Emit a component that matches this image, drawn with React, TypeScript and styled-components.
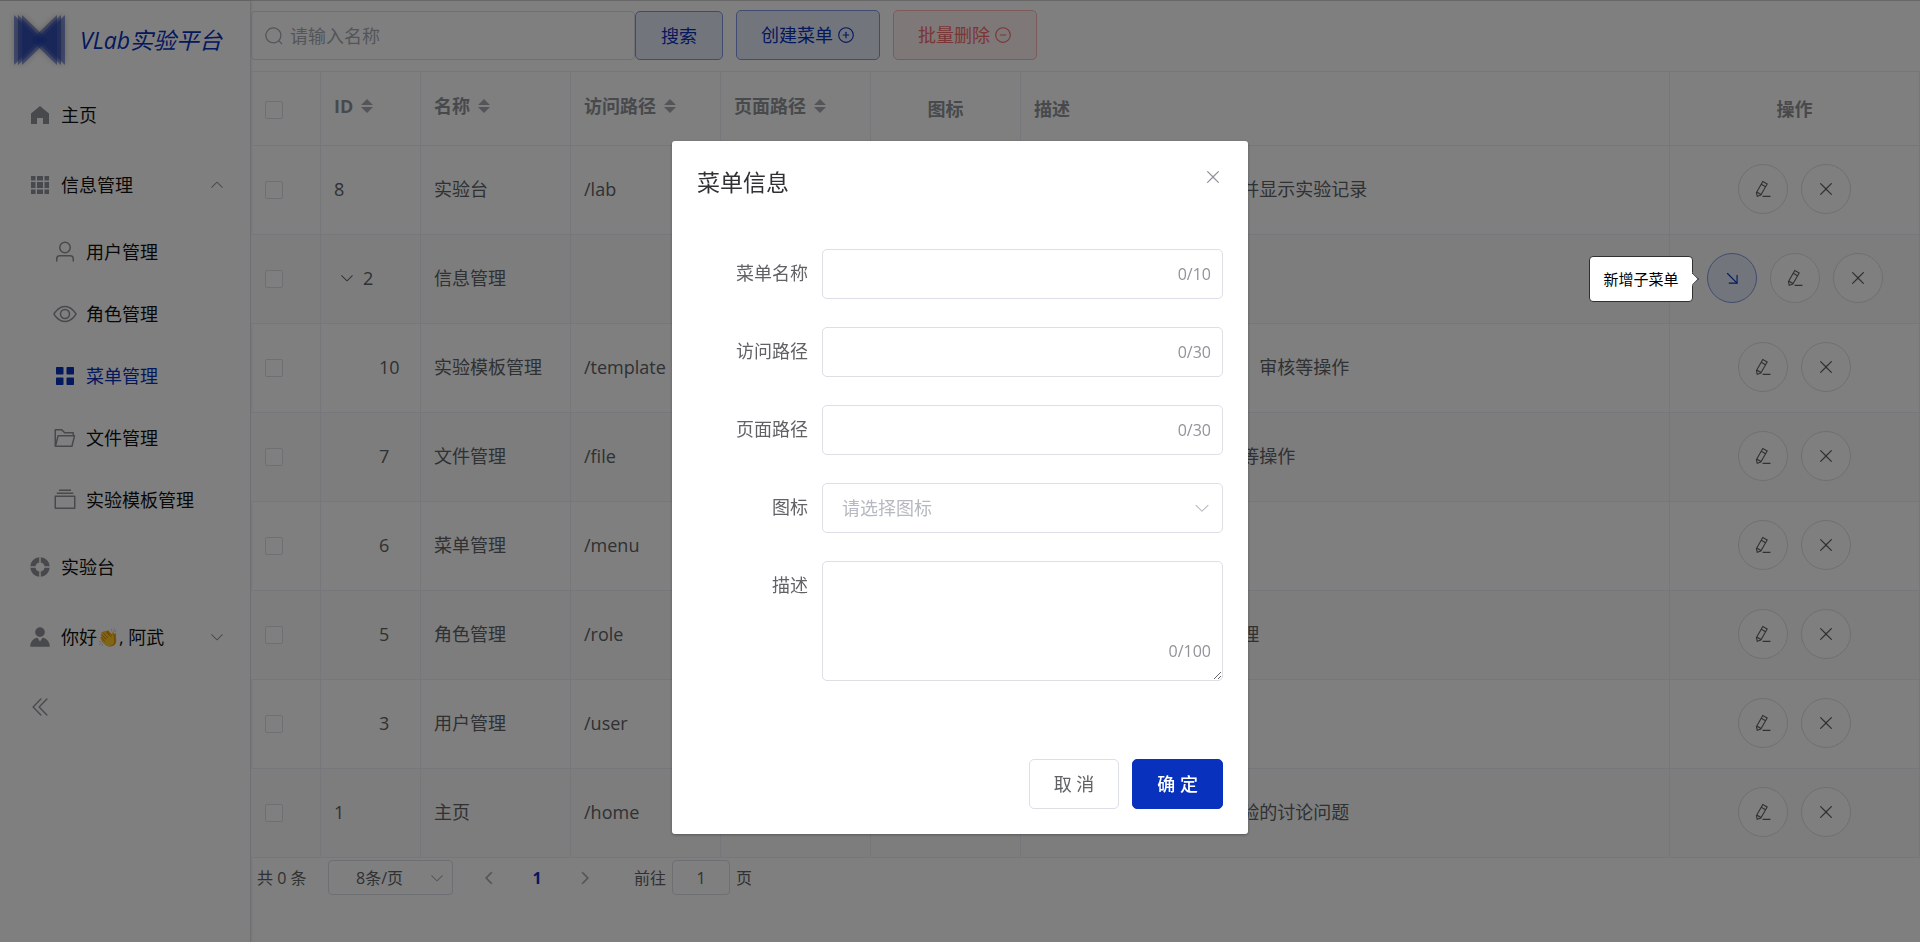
import React from "react";
import styled, { createGlobalStyle, css } from "styled-components";

const primary = "#0831bd";
const border = "#dcdfe6";
const line = "#ebeef5";
const muted = "#909399";
const regular = "#606266";

const GlobalStyle = createGlobalStyle`
  *, *::before, *::after { box-sizing: border-box; }
  body {
    margin: 0;
    background: #fff;
    color: ${regular};
    font-family: "Open Sans", "Noto Sans CJK SC", sans-serif;
    font-size: 18px;
    line-height: 24px;
  }
  button, input, select, textarea { font: inherit; color: inherit; }
  button { cursor: pointer; }
`;

/* ---------- icons ---------- */

const paths = {
  home: ["M512 128 128 447.936V896h255.936V640H640v256h255.936V447.936z"],
  grid: [
    "M640 384v256H384V384zm64 0h192v256H704zm-64 512H384V704h256zm64 0V704h192v192zm-64-768v192H384V128zm64 0h192v192H704zM320 384v256H128V384zm0 512H128V704h192zm0-768v192H128V128z",
  ],
  user: [
    "M512 512a192 192 0 1 0 0-384 192 192 0 0 0 0 384m0 64a256 256 0 1 1 0-512 256 256 0 0 1 0 512m320 320v-96a96 96 0 0 0-96-96H288a96 96 0 0 0-96 96v96a32 32 0 1 1-64 0v-96a160 160 0 0 1 160-160h448a160 160 0 0 1 160 160v96a32 32 0 1 1-64 0",
  ],
  view: [
    "M512 160c320 0 512 352 512 352S832 864 512 864 0 512 0 512s192-352 512-352m0 64c-225.28 0-384.128 208.064-436.8 288 52.608 79.872 211.456 288 436.8 288 225.28 0 384.128-208.064 436.8-288-52.608-79.872-211.456-288-436.8-288m0 64a224 224 0 1 1 0 448 224 224 0 0 1 0-448m0 64a160.192 160.192 0 0 0-160 160c0 88.192 71.744 160 160 160s160-71.808 160-160-71.744-160-160-160",
  ],
  menu: [
    "M160 448a32 32 0 0 1-32-32V160.064a32 32 0 0 1 32-32h256a32 32 0 0 1 32 32V416a32 32 0 0 1-32 32zm448 0a32 32 0 0 1-32-32V160.064a32 32 0 0 1 32-32h255.936a32 32 0 0 1 32 32V416a32 32 0 0 1-32 32zM160 896a32 32 0 0 1-32-32V608a32 32 0 0 1 32-32h256a32 32 0 0 1 32 32v256a32 32 0 0 1-32 32zm448 0a32 32 0 0 1-32-32V608a32 32 0 0 1 32-32h255.936a32 32 0 0 1 32 32v256a32 32 0 0 1-32 32z",
  ],
  folder: [
    "M878.08 448H241.92l-96 384h636.16zM832 384v-64H485.76L357.504 192H128v448l57.92-231.744A32 32 0 0 1 216.96 384zm-24.96 512H96a32 32 0 0 1-32-32V160a32 32 0 0 1 32-32h287.872l128.384 128H864a32 32 0 0 1 32 32v96h23.04a32 32 0 0 1 31.04 39.744l-112 448A32 32 0 0 1 807.04 896",
  ],
  files: [
    "M128 384v448h768V384zm-32-64h832a32 32 0 0 1 32 32v512a32 32 0 0 1-32 32H96a32 32 0 0 1-32-32V352a32 32 0 0 1 32-32m64-128h704v64H160zm96-128h512v64H256z",
  ],
  help: [
    "M926.784 480H701.312A192.512 192.512 0 0 0 544 322.688V97.216A416.064 416.064 0 0 1 926.784 480m0 64A416.064 416.064 0 0 1 544 926.784V701.312A192.512 192.512 0 0 0 701.312 544zM97.28 544h225.472A192.512 192.512 0 0 0 480 701.312v225.472A416.064 416.064 0 0 1 97.216 544zm0-64A416.064 416.064 0 0 1 480 97.216v225.472A192.512 192.512 0 0 0 322.688 480H97.216z",
  ],
  avatar: [
    "M628.736 528.896A416 416 0 0 1 928 928H96a415.872 415.872 0 0 1 299.264-399.104L512 704zM720 304a208 208 0 1 1-416 0 208 208 0 0 1 416 0",
  ],
  collapse: [
    "M529.408 149.376a29.12 29.12 0 0 1 41.728 0 30.592 30.592 0 0 1 0 42.688L259.264 511.936l311.872 319.936a30.592 30.592 0 0 1-.512 43.264 29.12 29.12 0 0 1-41.216-.512L197.76 534.272a32 32 0 0 1 0-44.672zm256 0a29.12 29.12 0 0 1 41.728 0 30.592 30.592 0 0 1 0 42.688L515.264 511.936l311.872 319.936a30.592 30.592 0 0 1-.512 43.264 29.12 29.12 0 0 1-41.216-.512L453.76 534.272a32 32 0 0 1 0-44.672z",
  ],
  arrow: [
    "M831.872 340.864 512 652.672 192.128 340.864a30.592 30.592 0 0 0-42.752 0 29.12 29.12 0 0 0 0 41.6L489.664 714.24a32 32 0 0 0 44.672 0l340.288-331.712a29.12 29.12 0 0 0 0-41.728 30.592 30.592 0 0 0-42.752 0z",
  ],
  search: [
    "m795.904 750.72 124.992 124.928a32 32 0 0 1-45.248 45.248L750.656 795.904a416 416 0 1 1 45.248-45.248zM480 832a352 352 0 1 0 0-704 352 352 0 0 0 0 704",
  ],
  plus: [
    "M352 480h320a32 32 0 1 1 0 64H352a32 32 0 0 1 0-64",
    "M480 672V352a32 32 0 1 1 64 0v320a32 32 0 0 1-64 0",
    "M512 896a384 384 0 1 0 0-768 384 384 0 0 0 0 768m0 64a448 448 0 1 1 0-896 448 448 0 0 1 0 896",
  ],
  minus: [
    "M352 480h320a32 32 0 1 1 0 64H352a32 32 0 0 1 0-64",
    "M512 896a384 384 0 1 0 0-768 384 384 0 0 0 0 768m0 64a448 448 0 1 1 0-896 448 448 0 0 1 0 896",
  ],
  edit: [
    "m199.04 672.64 193.984 112 224-387.968-193.92-112-224 388.032zm-23.872 60.16 32.896 148.288 144.896-45.696zM455.04 229.248l193.92 112 56.704-98.112-193.984-112zM104.32 708.8l384-665.024 304.768 175.936L409.152 884.8h.064l-248.448 78.336zm384 254.272v-64h448v64z",
  ],
  close: [
    "M764.288 214.592 512 466.88 259.712 214.592a31.936 31.936 0 0 0-45.12 45.12L466.752 512 214.528 764.224a31.936 31.936 0 1 0 45.12 45.184L512 557.184l252.288 252.288a31.936 31.936 0 0 0 45.12-45.12L557.12 512.064l252.288-252.352a31.936 31.936 0 1 0-45.12-45.184z",
  ],
  bottomRight: [
    "M352 768a32 32 0 1 0 0 64h448a32 32 0 0 0 32-32V352a32 32 0 0 0-64 0v416z",
    "M777.344 822.624a32 32 0 0 0 45.312-45.312l-544-544a32 32 0 0 0-45.312 45.312z",
  ],
};
type IconName = keyof typeof paths;

const Svg = styled.svg<{ $size: number; $turn: number }>`
  flex: none;
  display: block;
  width: ${(p) => p.$size}px;
  height: ${(p) => p.$size}px;
  fill: currentColor;
  ${(p) => p.$turn !== 0 && css`transform: rotate(${p.$turn}deg);`}
`;

const Icon = ({ name, size = 18, turn = 0 }: { name: IconName; size?: number; turn?: number }) => (
  <Svg viewBox="0 0 1024 1024" aria-hidden="true" $size={size} $turn={turn}>
    {paths[name].map((d) => (
      <path key={d} d={d} />
    ))}
  </Svg>
);

const LogoSvg = styled.svg`
  flex: none;
  width: 52px;
  height: 52px;
  overflow: visible;
  filter: drop-shadow(0 0 3px rgba(0, 0, 0, 0.4));
`;

const Logo = () => (
  <LogoSvg viewBox="0 0 52 52" aria-hidden="true">
    {[0, 4, 8].map((d) => (
      <g key={d} fill="#1f40b4" fillOpacity="0.5">
        <path d={`M${1 + d} 1V51L${27 + d} 26Z`} />
        <path d={`M${52 - d} 1V51L${26 - d} 26Z`} />
      </g>
    ))}
  </LogoSvg>
);

/* ---------- page frame ---------- */

const Page = styled.div`
  display: flex;
  min-height: 100vh;
  border-top: 1px solid #d0d0d0;
`;

const Sidebar = styled.aside`
  flex: none;
  width: 251px;
  border-right: 1px solid ${border};
  box-shadow: 0 0 4px rgba(0, 0, 0, 0.12);
`;

const Brand = styled.a`
  display: flex;
  align-items: center;
  gap: 15px;
  height: 79px;
  padding: 0 0 2px 13px;
  color: ${primary};
  font-size: 23px;
  font-style: italic;
  text-decoration: none;
  white-space: nowrap;
`;

const itemStyles = css`
  display: flex;
  align-items: center;
  gap: 9px;
  width: 100%;
  height: 70px;
  padding: 0 25px 0 28px;
  border: 0;
  background: none;
  text-align: left;
  text-decoration: none;
  color: ${muted};
`;
const MenuLink = styled.a`${itemStyles}`;
const MenuButton = styled.button`${itemStyles}`;
const MenuText = styled.span`
  flex: 1;
  color: #111;
  white-space: nowrap;
`;
const SubMenu = styled.div`
  padding: 1px 0;
`;
const SubLink = styled.a<{ $active?: boolean }>`
  ${itemStyles}
  height: 62px;
  padding-left: 53px;
  ${(p) => p.$active && css`
    color: ${primary};
    ${MenuText} { color: ${primary}; }
  `}
`;

const Main = styled.main`
  flex: 1;
  min-width: 0;
`;

/* ---------- toolbar ---------- */

const Toolbar = styled.div`
  display: flex;
  align-items: flex-end;
  gap: 13px;
  padding: 9px 0 11px;
`;

const SearchGroup = styled.form`
  display: flex;
`;

const SearchBox = styled.label`
  display: flex;
  align-items: center;
  gap: 4px;
  width: 384px;
  height: 49px;
  padding: 0 12px;
  border: 1px solid ${border};
  border-radius: 4px;
  color: #a8abb2;
`;

const SearchInput = styled.input`
  flex: 1;
  min-width: 0;
  border: 0;
  outline: 0;
  background: none;
  color: ${regular};
  &::placeholder { color: #a8abb2; opacity: 1; }
`;

const tones = {
  plain: css`background: #fff; border-color: ${border}; color: ${regular};`,
  primary: css`background: #e6eaf8; border-color: #8397de; color: ${primary};`,
  danger: css`background: #fef0f0; border-color: #fab6b6; color: #f56c6c;`,
  solid: css`background: ${primary}; border-color: ${primary}; color: #fff; font-weight: 500;`,
};

const Button = styled.button<{ $tone: keyof typeof tones; $short?: boolean }>`
  display: inline-flex;
  align-items: center;
  justify-content: center;
  gap: 4px;
  height: ${(p) => (p.$short ? 49 : 50)}px;
  padding: 0 ${(p) => (p.$short ? 25 : 24)}px;
  border: 1px solid;
  border-radius: 5px;
  white-space: nowrap;
  ${(p) => tones[p.$tone]}
`;

/* ---------- table ---------- */

const Table = styled.table`
  width: 100%;
  table-layout: fixed;
  border-collapse: separate;
  border-spacing: 0;
  border-top: 1px solid ${line};
`;
const Col = styled.col<{ $w?: number }>`
  ${(p) => p.$w && css`width: ${p.$w}px;`}
`;

const cellStyles = css<{ $center?: boolean }>`
  padding: 0 13px;
  border-right: 1px solid ${line};
  border-bottom: 1px solid ${line};
  text-align: ${(p) => (p.$center ? "center" : "left")};
  vertical-align: middle;
  white-space: nowrap;
`;
const Th = styled.th<{ $center?: boolean }>`
  ${cellStyles}
  height: 74px;
  color: ${muted};
  font-weight: 700;
`;
const Td = styled.td<{ $center?: boolean }>`
  ${cellStyles}
  height: 89px;
  padding-bottom: 2px;
`;
const Row = styled.tr`
  &:nth-child(even) { background: #fafafa; }
`;

const Check = styled.input`
  appearance: none;
  display: block;
  width: 18px;
  height: 18px;
  margin: 2px 0 0 1px;
  border: 1px solid ${border};
  border-radius: 2px;
  background: #fff;
`;

const SortButton = styled.button`
  display: flex;
  align-items: center;
  gap: 7px;
  padding: 0 0 5px;
  border: 0;
  background: none;
  font-weight: 700;
`;
const SortSvg = styled.svg`
  width: 14px;
  height: 14px;
  fill: #a8abb2;
`;

const SortHead = ({ children }: { children: string }) => (
  <Th scope="col">
    <SortButton type="button">
      {children}
      <SortSvg viewBox="0 0 14 14" aria-hidden="true">
        <path d="M7 0 13 6H1ZM7 14 1 8H13Z" />
      </SortSvg>
    </SortButton>
  </Th>
);

const Tree = styled.div<{ $child?: boolean }>`
  display: flex;
  align-items: center;
  padding-left: ${(p) => (p.$child ? 45 : 0)}px;
`;
const Expander = styled.button`
  display: flex;
  margin: 0 8px 0 5px;
  padding: 0;
  border: 0;
  background: none;
`;

const Actions = styled.div`
  display: flex;
  justify-content: center;
  gap: 13px;
`;
const RoundButton = styled.button<{ $tone: "plain" | "primary" }>`
  display: flex;
  align-items: center;
  justify-content: center;
  width: 50px;
  height: 50px;
  padding: 0;
  border: 1px solid;
  border-radius: 50%;
  ${(p) => tones[p.$tone]}
`;
const TipAnchor = styled.div`
  position: relative;
`;
const Tooltip = styled.div`
  position: absolute;
  z-index: 20;
  top: 3px;
  right: calc(100% + 14px);
  padding: 10px 13px;
  border: 1px solid #303133;
  border-radius: 4px;
  background: #fff;
  color: #000;
  font-size: 15px;
  white-space: nowrap;
  &::after {
    content: "";
    position: absolute;
    top: 17px;
    right: -5px;
    width: 10px;
    height: 10px;
    border: 1px solid #303133;
    border-left-color: transparent;
    border-bottom-color: transparent;
    background: #fff;
    transform: rotate(45deg);
  }
`;

/* ---------- pagination ---------- */

const Pager = styled.nav`
  display: flex;
  align-items: center;
  padding: 2px 6px;
  font-size: 16px;
`;
const SelectWrap = styled.div`
  position: relative;
  display: flex;
  align-items: center;
  color: #a8abb2;
`;
const PageSize = styled.select`
  appearance: none;
  width: 125px;
  height: 35px;
  margin: 0;
  padding: 0 30px 0 8px;
  border: 1px solid ${border};
  border-radius: 4px;
  background: #fff;
  color: ${regular};
  text-align: center;
  text-align-last: center;
`;
const SelectArrow = styled.span<{ $inset: number }>`
  position: absolute;
  right: ${(p) => p.$inset}px;
  pointer-events: none;
`;
const Total = styled.span`
  width: 71px;
`;
const PageButton = styled.button<{ $current?: boolean }>`
  display: flex;
  align-items: center;
  justify-content: center;
  width: 48px;
  height: 35px;
  padding: 0;
  border: 0;
  background: none;
  color: ${(p) => (p.$current ? primary : "#a8abb2")};
  font-weight: 700;
  ${Svg} {
    stroke: currentColor;
    stroke-width: 60;
  }
`;
const PageList = styled.div`
  display: flex;
  margin: 0 25px 0 12px;
`;
const Jumper = styled.label`
  display: flex;
  align-items: center;
  gap: 6px;
`;
const JumperInput = styled.input`
  width: 58px;
  height: 35px;
  border: 1px solid ${border};
  border-radius: 4px;
  background: #fff;
  text-align: center;
`;

/* ---------- dialog ---------- */

const Overlay = styled.div`
  position: fixed;
  inset: 0;
  z-index: 10;
  background: rgba(0, 0, 0, 0.5);
`;
const Dialog = styled.section`
  width: 30%;
  margin: 15vh auto 0;
  padding: 26px 25px 25px;
  border-radius: 3px;
  background: #fff;
  box-shadow: 0 1px 3px rgba(0, 0, 0, 0.3);
`;
const DialogHead = styled.header`
  display: flex;
  justify-content: space-between;
  align-items: flex-start;
  margin-bottom: 52px;
`;
const DialogTitle = styled.h2`
  margin: 0;
  color: #303133;
  font-size: 23px;
  font-weight: 400;
  line-height: 30px;
`;
const CloseButton = styled.button`
  display: flex;
  padding: 0;
  border: 0;
  background: none;
  color: ${muted};
`;
const Form = styled.form`
  display: grid;
  gap: 28px;
`;
const Field = styled.div`
  display: grid;
  grid-template-columns: 111px 1fr;
  gap: 14px;
`;
const FieldLabel = styled.label`
  text-align: right;
  line-height: 48px;
`;
const Control = styled.div`
  position: relative;
  display: flex;
  align-items: center;
`;
const boxStyles = css`
  display: block;
  width: 100%;
  border: 1px solid ${border};
  border-radius: 5px;
  outline: 0;
  background: #fff;
`;
const TextInput = styled.input`
  ${boxStyles}
  height: 50px;
  padding: 0 60px 0 20px;
`;
const IconSelect = styled.select`
  ${boxStyles}
  appearance: none;
  height: 50px;
  padding: 0 40px 0 19px;
  color: #b6b9c1;
`;
const TextArea = styled.textarea`
  ${boxStyles}
  height: 120px;
  padding: 8px 16px;
  resize: vertical;
`;
const Counter = styled.span<{ $low?: boolean }>`
  position: absolute;
  right: 12px;
  ${(p) => p.$low && css`bottom: 18px;`}
  color: ${muted};
  font-size: 16px;
`;
const DialogFoot = styled.footer`
  display: flex;
  justify-content: flex-end;
  gap: 13px;
  margin-top: 78px;
`;
const Arrow = styled.span`
  display: flex;
  color: #b6b9c1;
`;

/* ---------- data ---------- */

type Item = {
  id: number;
  name: string;
  path: string;
  page: string;
  icon: IconName;
  text: string;
  child?: boolean;
  parent?: boolean;
};

const rows: Item[] = [
  { id: 8, name: "实验台", path: "/lab", page: "/lab", icon: "help", text: "用户可在此 运行 实验代码并显示实验记录" },
  { id: 2, name: "信息管理", path: "", page: "", icon: "grid", text: "", parent: true },
  { id: 10, name: "实验模板管理", path: "/template", page: "/template", icon: "files", text: "对模板进行 新增 修改删除、审核等操作", child: true },
  { id: 7, name: "文件管理", path: "/file", page: "/file", icon: "folder", text: "对文件进行 上传 下载删除等操作", child: true },
  { id: 6, name: "菜单管理", path: "/menu", page: "/menu", icon: "menu", text: "对系统菜单进行管理", child: true },
  { id: 5, name: "角色管理", path: "/role", page: "/role", icon: "view", text: "对系统角色 和权限 进行管理", child: true },
  { id: 3, name: "用户管理", path: "/user", page: "/user", icon: "user", text: "对系统用户进行管理", child: true },
  { id: 1, name: "主页", path: "/home", page: "/home", icon: "home", text: "主页展示 用户发布 关于实验的讨论问题" },
];

const subItems: { icon: IconName; text: string; active?: boolean }[] = [
  { icon: "user", text: "用户管理" },
  { icon: "view", text: "角色管理" },
  { icon: "menu", text: "菜单管理", active: true },
  { icon: "folder", text: "文件管理" },
  { icon: "files", text: "实验模板管理" },
];

const inputs = [
  { id: "menu-name", label: "菜单名称", max: 10 },
  { id: "menu-path", label: "访问路径", max: 30 },
  { id: "menu-page", label: "页面路径", max: 30 },
];

const IconCell = styled.span`
  display: flex;
  justify-content: center;
`;

export default function App() {
  return (
    <>
      <GlobalStyle />
      <Page>
        <Sidebar>
          <Brand href="#">
            <Logo />
            VLab实验平台
          </Brand>
          <nav>
            <MenuLink href="#">
              <Icon name="home" size={24} />
              <MenuText>主页</MenuText>
            </MenuLink>
            <MenuButton type="button" aria-expanded="true">
              <Icon name="grid" size={24} />
              <MenuText>信息管理</MenuText>
              <Icon name="arrow" size={16} turn={180} />
            </MenuButton>
            <SubMenu>
              {subItems.map((s) => (
                <SubLink key={s.text} href="#" $active={s.active}>
                  <Icon name={s.icon} size={24} />
                  <MenuText>{s.text}</MenuText>
                </SubLink>
              ))}
            </SubMenu>
            <MenuLink href="#">
              <Icon name="help" size={24} />
              <MenuText>实验台</MenuText>
            </MenuLink>
            <MenuButton type="button" aria-expanded="false">
              <Icon name="avatar" size={24} />
              <MenuText>你好👏, 阿武</MenuText>
              <Icon name="arrow" size={16} />
            </MenuButton>
            <MenuButton type="button" aria-label="收起菜单">
              <Icon name="collapse" size={24} />
            </MenuButton>
          </nav>
        </Sidebar>

        <Main>
          <Toolbar>
            <SearchGroup onSubmit={(e) => e.preventDefault()}>
              <SearchBox>
                <Icon name="search" size={20} />
                <SearchInput type="text" placeholder="请输入名称" aria-label="名称" />
              </SearchBox>
              <Button $tone="primary" $short type="submit">搜索</Button>
            </SearchGroup>
            <Button $tone="primary" type="button">
              创建菜单
              <Icon name="plus" />
            </Button>
            <Button $tone="danger" type="button">
              批量删除
              <Icon name="minus" />
            </Button>
          </Toolbar>

          <Table>
            <colgroup>
              <Col $w={70} />
              <Col $w={100} />
              <Col $w={150} />
              <Col $w={150} />
              <Col $w={150} />
              <Col $w={150} />
              <Col />
              <Col $w={250} />
            </colgroup>
            <thead>
              <tr>
                <Th scope="col">
                  <Check type="checkbox" aria-label="全选" />
                </Th>
                <SortHead>ID</SortHead>
                <SortHead>名称</SortHead>
                <SortHead>访问路径</SortHead>
                <SortHead>页面路径</SortHead>
                <Th scope="col" $center>图标</Th>
                <Th scope="col">描述</Th>
                <Th scope="col" $center>操作</Th>
              </tr>
            </thead>
            <tbody>
              {rows.map((r) => (
                <Row key={r.id}>
                  <Td>
                    <Check type="checkbox" aria-label={r.name} />
                  </Td>
                  <Td>
                    <Tree $child={r.child}>
                      {r.parent && (
                        <Expander type="button" aria-label="收起">
                          <Icon name="arrow" size={16} />
                        </Expander>
                      )}
                      {r.id}
                    </Tree>
                  </Td>
                  <Td>{r.name}</Td>
                  <Td>{r.path}</Td>
                  <Td>{r.page}</Td>
                  <Td $center>
                    <IconCell>
                      <Icon name={r.icon} />
                    </IconCell>
                  </Td>
                  <Td>{r.text}</Td>
                  <Td $center>
                    <Actions>
                      {r.parent && (
                        <TipAnchor>
                          <RoundButton $tone="primary" type="button" aria-describedby="add-child-tip">
                            <Icon name="bottomRight" />
                          </RoundButton>
                          <Tooltip id="add-child-tip" role="tooltip">新增子菜单</Tooltip>
                        </TipAnchor>
                      )}
                      <RoundButton $tone="plain" type="button" aria-label="编辑">
                        <Icon name="edit" />
                      </RoundButton>
                      <RoundButton $tone="plain" type="button" aria-label="删除">
                        <Icon name="close" size={20} />
                      </RoundButton>
                    </Actions>
                  </Td>
                </Row>
              ))}
            </tbody>
          </Table>

          <Pager aria-label="分页">
            <Total>共 0 条</Total>
            <SelectWrap>
              <PageSize aria-label="每页条数" defaultValue="8">
                <option value="8">8条/页</option>
                <option value="16">16条/页</option>
              </PageSize>
              <SelectArrow $inset={8}>
                <Icon name="arrow" size={16} />
              </SelectArrow>
            </SelectWrap>
            <PageList>
              <PageButton type="button" aria-label="上一页">
                <Icon name="arrow" size={16} turn={90} />
              </PageButton>
              <PageButton type="button" $current>1</PageButton>
              <PageButton type="button" aria-label="下一页">
                <Icon name="arrow" size={16} turn={-90} />
              </PageButton>
            </PageList>
            <Jumper>
              前往
              <JumperInput type="text" defaultValue="1" />
              页
            </Jumper>
          </Pager>
        </Main>
      </Page>

      <Overlay>
        <Dialog role="dialog" aria-modal="true" aria-labelledby="dialog-title">
          <DialogHead>
            <DialogTitle id="dialog-title">菜单信息</DialogTitle>
            <CloseButton type="button" aria-label="关闭">
              <Icon name="close" size={20} />
            </CloseButton>
          </DialogHead>
          <Form id="menu-form" onSubmit={(e) => e.preventDefault()}>
            {inputs.map((f) => (
              <Field key={f.id}>
                <FieldLabel htmlFor={f.id}>{f.label}</FieldLabel>
                <Control>
                  <TextInput id={f.id} type="text" maxLength={f.max} />
                  <Counter>0/{f.max}</Counter>
                </Control>
              </Field>
            ))}
            <Field>
              <FieldLabel htmlFor="menu-icon">图标</FieldLabel>
              <Control>
                <IconSelect id="menu-icon" defaultValue="">
                  <option value="">请选择图标</option>
                </IconSelect>
                <SelectArrow $inset={12}>
                  <Arrow>
                    <Icon name="arrow" />
                  </Arrow>
                </SelectArrow>
              </Control>
            </Field>
            <Field>
              <FieldLabel htmlFor="menu-text">描述</FieldLabel>
              <Control>
                <TextArea id="menu-text" maxLength={100} />
                <Counter $low>0/100</Counter>
              </Control>
            </Field>
          </Form>
          <DialogFoot>
            <Button $tone="plain" type="button">取 消</Button>
            <Button $tone="solid" type="submit" form="menu-form">确 定</Button>
          </DialogFoot>
        </Dialog>
      </Overlay>
    </>
  );
}
